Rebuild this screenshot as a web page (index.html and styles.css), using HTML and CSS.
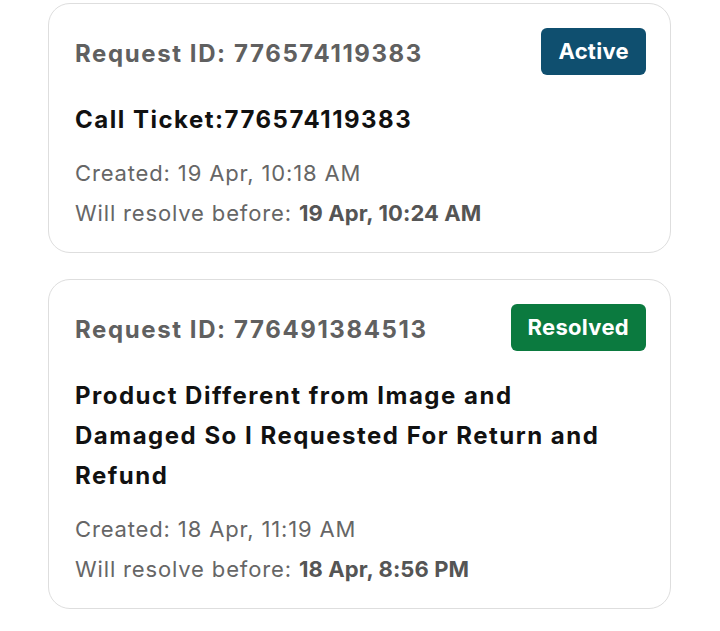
FILE: index.html
```
<!DOCTYPE html>
<html lang="en">
<head>
    <meta charset="UTF-8">
    <meta name="viewport" content="width=device-width, initial-scale=1.0">
    <title>My Requests</title>
    <link rel="stylesheet" href="styles.css">
</head>
<body>
    <div class="list">
        <div class="ticket">
            <div class="ticket-head">
                <span class="ticket-id">Request ID: 776574119383</span>
                <span class="badge badge-active">Active</span>
            </div>
            <h3 class="ticket-title">Call Ticket:776574119383</h3>
            <p class="meta">Created: 19 Apr, 10:18 AM</p>
            <p class="meta">Will resolve before: <b>19 Apr, 10:24 AM</b></p>
        </div>
        <div class="ticket">
            <div class="ticket-head">
                <span class="ticket-id">Request ID: 776491384513</span>
                <span class="badge badge-resolved">Resolved</span>
            </div>
            <h3 class="ticket-title">Product Different from Image and Damaged So I Requested For Return and Refund</h3>
            <p class="meta">Created: 18 Apr, 11:19 AM</p>
            <p class="meta">Will resolve before: <b>18 Apr, 8:56 PM</b></p>
        </div>
    </div>
</body>
</html>
```

FILE: styles.css
```
body {
    margin: 0;
    background-color: #ffffff;
    font-family: "Inter", "Liberation Sans", sans-serif;
}
.list {
    display: flex;
    flex-direction: column;
    gap: 26px;
    padding: 3px 49px 0 48px;
}
.ticket {
    border: 1.5px solid #dedede;
    border-radius: 22px;
    padding: 24px 24px 19px 26px;
}
.ticket-head {
    display: flex;
    justify-content: space-between;
    align-items: center;
}
.ticket-id {
    padding-top: 3px;
    font-size: 24px;
    font-weight: 700;
    letter-spacing: 1.6px;
    color: #606060;
}
.badge {
    color: #fff;
    font-size: 22px;
    font-weight: 700;
    line-height: 27px;
    letter-spacing: 0.3px;
    padding: 10px 17px;
    border-radius: 6px;
}
.badge-active {
    background-color: #0f4f6f;
}
.badge-resolved {
    background-color: #0b7a3f;
}
.ticket-title {
    margin: 25px 0 13px;
    padding-right: 20px;
    font-size: 24px;
    font-weight: 700;
    line-height: 40px;
    letter-spacing: 1.5px;
    color: #111;
}
.meta {
    margin: 0;
    font-size: 22px;
    line-height: 40px;
    letter-spacing: 0.85px;
    color: #666;
}
.meta b {
    letter-spacing: 0.1px;
    color: #555;
}
```
